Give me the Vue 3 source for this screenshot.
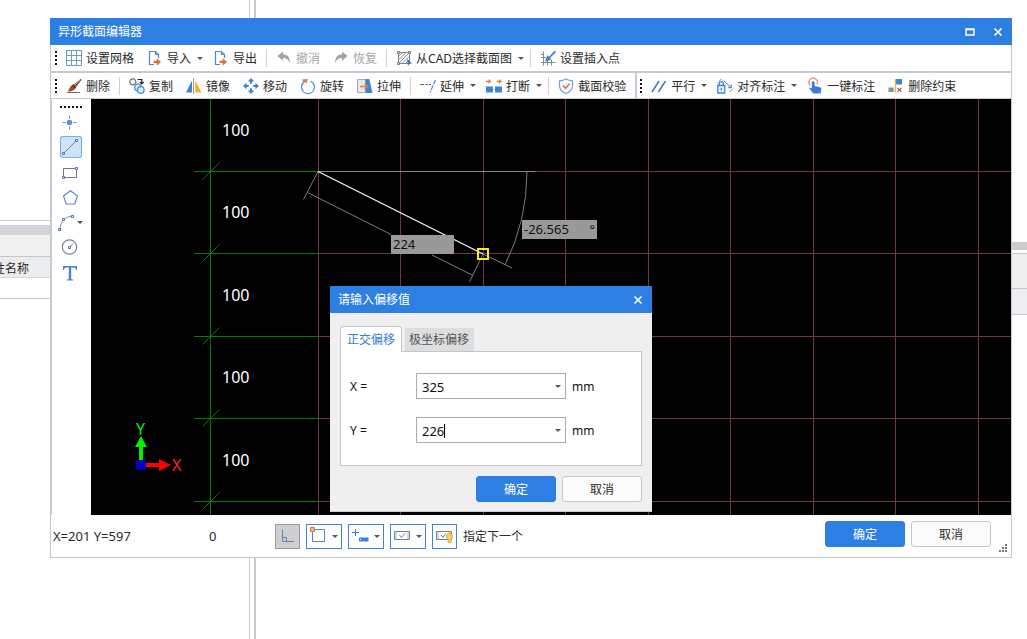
<script setup>
import { ref, computed } from 'vue'

const icons = {
  grid: '<path d="M.5.5h15v15H.5zM5.5.5v15M10.5.5v15M.5 5.5h15M.5 10.5h15" fill="none" stroke="#6f97c9"/>',
  import: '<path d="M7 14.5H2.5v-13h6l3 3V8M8.500 1.500v3h3" fill="none" stroke="#4b8ad6" stroke-width="1.200"/><path d="M6.500 10.800h3.200V8l4.300 3.900-4.300 3.900v-2.900H6.500z" fill="#d9772f"/>',
  export: '<path d="M7 14.5H2.5v-13h6l3 3V8M8.500 1.500v3h3" fill="none" stroke="#4b8ad6" stroke-width="1.200"/><path d="M6.500 10.800h3.200V8l4.300 3.900-4.300 3.900v-2.900H6.500z" fill="#d9772f"/>',
  undo: '<path d="M1.500 6 7 1.500v2.800c4.500.2 7 3 6.800 9.200C12.500 9.500 10.700 8 7 7.900v2.800z" fill="#a3a3a3"/>',
  redo: '<path d="M14.500 6 9 1.500v2.800C4.500 4.500 2 7.300 2.200 13.500 3.500 9.500 5.300 8 9 7.900v2.800z" fill="#a3a3a3"/>',
  cad: '<path d="M2.500 2.500h11v11h-11z" fill="none" stroke="#888"/><path d="M3 6l3-3M3 9.500 9.500 3M3 13 13 3M6.500 13 13 6.500M10 13l3-3" stroke="#8f9499" fill="none"/><path d="M1.500 1.500h2v2h-2zM12.500 1.500h2v2h-2zM1.500 12.500h2v2h-2z" fill="#fff" stroke="#777"/><path d="M11 9l5 4.500-2.500.3L12 16z" fill="#2e6fc7"/>',
  insert: '<path d="M3.500 1.500v14M1 12.500h14.500M1 7.500h5M7.500 9v6.500M11.500 10v5.500M1 4.500h3" fill="none" stroke="#8b8b8b"/><path d="M14.500.8 9 6.800 7.300 5.200 5 11.800l6.600-2.200-1.600-1.500L16 2z" fill="#3c80d2"/>',
  brush: '<path d="M1 14.500h13" stroke="#666"/><path d="M14.800.8 8 6.500l2.200 2.300L15.500 2z" fill="#555"/><path d="M14 2 8.500 7.500" stroke="#d9a066"/><path d="M7.800 6.300C4.500 7 3.800 10 2 13.500c3.800.3 7.300-1.500 8.400-4.800z" fill="#a04b2d"/><path d="M6.800 7.200 9.500 10" stroke="#4a2a20" stroke-width="1.300"/>',
  copy: '<circle cx="3.800" cy="3.800" r="3" fill="#f3f3f3" stroke="#777" stroke-width="1.200"/><circle cx="9" cy="9.500" r="3.300" fill="#dcebfa" stroke="#4b8ad6" stroke-width="1.300"/><circle cx="11.800" cy="12" r="3.300" fill="#dcebfa" stroke="#4b8ad6" stroke-width="1.300"/><path d="M8.500 1.500h4.300V5M10.800 3.800l2 2 2-2" fill="none" stroke="#222" stroke-width="1.200"/>',
  mirror: '<path d="M6 2.500V14.500H0z" fill="#3f83d4"/><path d="M7.500 0v16" stroke="#999"/><path d="M9.200 2.500V14.500h6.300z" fill="#efb02f"/>',
  move: '<path d="M8 0l3.200 3.600H9v2.200H7V3.600H4.800zM8 16l3.200-3.600H9v-2.200H7v2.200H4.800zM0 8l3.600-3.200V7h2.200v2H3.600v2.200zM16 8l-3.600-3.200V7h-2.200v2h2.200v2.200z" fill="#3f83d4"/>',
  rotate: '<path d="M10.500 3.200A6.500 6.500 0 1 1 4.300 3.900" fill="none" stroke="#5b97dc" stroke-width="1.300"/><path d="M2 1.500 8 1l-1.500 4.500L5.300 4 3.500 5z" fill="#e2813b"/>',
  stretch: '<path d="M.5 1.500h8v13h-8z" fill="#e6e8eb" stroke="#a5a9b0"/><path d="M8.500 1h3.800l3.200 14h-7z" fill="#3f83d4"/><path d="M3 8.500h6M7.500 6l3 2.500-3 2.500" fill="none" stroke="#e2813b" stroke-width="1.400"/>',
  extend: '<path d="M0 6.500h4M5.500 6.500H8M9 6.500h2" stroke="#666"/><path d="M15.500 2 10 14.500" stroke="#4b8ad6" stroke-width="1.200" stroke-dasharray="5 1"/>',
  break: '<path d="M0 8.500h7v6H0zM9 8.500h7v6H9z" fill="#3f83d4"/><path d="M0 3.500h5M3 1.500v4M11 3.500h5M13.500 1.500v4" stroke="#e2813b" stroke-width="1.300"/><path d="M7.500 11.500h1" stroke="#999"/>',
  shield: '<path d="M8 .8c2 1.500 4.200 2 6.500 2v4.700c0 4-2.500 6.500-6.500 8-4-1.500-6.500-4-6.500-8V2.800c2.300 0 4.500-.5 6.500-2z" fill="#f5faff" stroke="#6fa2dd" stroke-width="1.200"/><path d="M4.800 7.500l2.700 2.800 4-4.600" fill="none" stroke="#e06e4a" stroke-width="1.500"/>',
  parallel: '<path d="M1 14 8 3M7.500 14l7-11" stroke="#4b78b0" stroke-width="1.500"/>',
  align: '<path d="M.8 7.500h7v7.500h-7z" fill="#eaf3fd" stroke="#3f83d4" stroke-width="1.300"/><path d="M2.300 7.500V5.700a2 2 0 0 1 4 0v1.800M4.300 10v2.500" fill="none" stroke="#3f83d4" stroke-width="1.300"/><path d="M1 4.500 4.500.8M12.500 14 16 10.500" stroke="#888"/><path d="M6.500 2.500 14 9.500M14.200 6.500v3.200h-3.200" fill="none" stroke="#4b78b0"/>',
  hand: '<path d="M3.200 7.200A4.200 4.200 0 1 1 9.800 6.500" fill="none" stroke="#e88a73" stroke-width="1.300"/><path d="M4.800 4.500c0-1.700 2.800-1.700 2.800 0V8l5.300 1.200c1.300.3 1.600 1 1.400 2.200L13.600 15.500H6.200L2.500 10.800c-.6-1.200.8-1.800 2.300-.2z" fill="#3a7fd3"/>',
  constraint: '<path d="M8 1h6v5.500H8z" fill="#3f83d4"/><path d="M7.500 1v13.500" stroke="#edb33a" stroke-width="1.300"/><path d="M.5 9.500h5.200V14H.5z" fill="#8c929b"/><path d="M9.500 9.800l4 4M13.500 9.800l-4 4" stroke="#b04a3a" stroke-width="1.100"/>',
}

const tools = {
  point: '<path d="M9.500 4.500v3M9.500 15.500v3M2.500 11.500h3M13.500 11.500h3" stroke="#8a9077"/><circle cx="9.500" cy="11.500" r="2.800" fill="#6090dc"/>',
  line: '<path d="M4 17 17 4" stroke="#6c7f98"/><path d="M2.500 16.500h2v2h-2zM15.500 3.500h2v2h-2z" fill="#eef6ff" stroke="#4876b8"/>',
  rect: '<path d="M3.500 7.500h13v9h-13z" fill="none" stroke="#777"/><path d="M2.500 15.500h2v2h-2zM15.500 6.500h2v2h-2z" fill="#fff" stroke="#4876b8"/>',
  polygon: '<path d="M10.500 4.800 17.500 10l-2.700 8H6.200L3.500 10z" fill="none" stroke="#5a87cb" stroke-width="1.200"/>',
  arc: '<path d="M0 18C.5 10 5 5.500 13 5" fill="none" stroke="#8196b4"/><path d="M-1.500 17.500h2v2h-2zM2.500 7.500h2v2h-2zM11.500 4.500h2v2h-2z" fill="#fff" stroke="#4876b8"/>',
  circle: '<circle cx="9.500" cy="11" r="7.200" fill="none" stroke="#7a7f87" stroke-width="1.200"/><path d="M9.500 11 13 7.500" stroke="#777"/><path d="M8.500 10.500h2v2h-2z" fill="#fff" stroke="#4876b8"/>',
  text: '<path d="M3 5h14v4h-1c-.3-1.800-1-2.500-3-2.500h-1.800V17c0 1 .5 1.500 2 1.500v1H6.800v-1c1.500 0 2-.5 2-1.500V6.500H7C5 6.500 4.300 7.200 4 9H3z" fill="#5182ca"/>',
}

const snaps = [
  { label: '正交', art: '<path d="M3.500 1.500v12H15M3.500 9.500h4v4" fill="none" stroke="#5b87b5"/>', on: true },
  { label: '捕捉', art: '<path d="M2.500 1.500h12v12h-12z" fill="none" stroke="#4f86c4"/><path d="M.5-.5h4v4h-4z" fill="#f2b489" stroke="#d9773a"/>', menu: true },
  { label: '输入', art: '<path d="M0 4.500h7M3.500 1v7" stroke="#3c78c0"/><path d="M7 9.500h9.500v4H7z" fill="#3c80d8"/><path d="M8 11.500h1" stroke="#fff"/>', menu: true },
  { label: '显示', art: '<path d="M.5 3.500h15v8H.5z" fill="#d3d7db" stroke="#7a8087"/><path d="M3 4h10v7H3z" fill="#fff"/><path d="M5.500 7l2 2.500 3.500-4" fill="none" stroke="#4f86c4"/>', menu: true },
  { label: '提示', art: '<path d="M.5 3.500h15v8H.5z" fill="#d3d7db" stroke="#7a8087"/><path d="M3 4h10v7H3z" fill="#fff"/><path d="M5 7l2 2.500 3-4" fill="none" stroke="#4f86c4"/><path d="M13.500 5.500c4 0 3.500 4.500 1.500 6v3h-3v-3c-2-1.500-2.500-6 1.500-6z" fill="#f6cf5c" stroke="#c99b3a" stroke-width=".7"/>' },
]

const fileTools = [
  { icon: 'grid', text: '设置网格' },
  { icon: 'import', text: '导入', menu: true },
  { icon: 'export', text: '导出' },
  { sep: true },
  { icon: 'undo', text: '撤消', off: true },
  { icon: 'redo', text: '恢复', off: true },
  { sep: true },
  { icon: 'cad', text: '从CAD选择截面图', menu: true },
  { sep: true },
  { icon: 'insert', text: '设置插入点' },
]
const editTools = [
  { icon: 'brush', text: '删除' },
  { sep: true },
  { icon: 'copy', text: '复制' },
  { icon: 'mirror', text: '镜像' },
  { icon: 'move', text: '移动' },
  { icon: 'rotate', text: '旋转' },
  { icon: 'stretch', text: '拉伸' },
  { sep: true },
  { icon: 'extend', text: '延伸', menu: true },
  { icon: 'break', text: '打断', menu: true },
  { sep: true },
  { icon: 'shield', text: '截面校验' },
]
const markTools = [
  { icon: 'parallel', text: '平行', menu: true },
  { icon: 'align', text: '对齐标注', menu: true },
  { icon: 'hand', text: '一键标注' },
  { icon: 'constraint', text: '删除约束' },
]
const rows = [[fileTools], [editTools, markTools]]

const drawTools = [
  { id: 'point', label: '点' },
  { id: 'line', label: '直线' },
  { id: 'rect', label: '矩形' },
  { id: 'polygon', label: '多边形' },
  { id: 'arc', label: '弧', menu: true },
  { id: 'circle', label: '圆' },
  { id: 'text', label: '文字' },
]
const tool = ref('line')

const step = 82.5
const columns = computed(() => Array.from({ length: 24 }, (_, i) => Math.floor(227 + i * step) + 0.5))
const levels = computed(() => Array.from({ length: 5 }, (_, i) => Math.floor(72 + i * step) + 0.5))

const length = ref('224')
const angle = ref('-26.565')
const tab = ref('ortho')
const offsets = ref([
  { id: 'offset-x', label: 'X =', value: '325' },
  { id: 'offset-y', label: 'Y =', value: '226', caret: true },
])
</script>

<template>
  <div class="desktop">
    <div class="split" aria-hidden="true"></div>
    <div class="back back-left">
      <div class="band"></div>
      <div class="strip"></div>
      <div class="head"><span>性名称</span></div>
      <div class="line"></div>
    </div>
    <div class="back back-right">
      <div class="band"></div>
      <div class="cell"></div>
      <div class="cell short"></div>
    </div>

    <main class="window">
      <header class="title">
        <h1>异形截面编辑器</h1>
        <button type="button" aria-label="最大化">
          <svg width="10" height="10"><path d="M1 2h8v6H1zM1 2.500h8" fill="none" stroke="#fff" stroke-width="1.500" /></svg>
        </button>
        <button type="button" aria-label="关闭">
          <svg width="10" height="10"><path d="M1.500 1.500l7 7M8.500 1.500l-7 7" stroke="#fff" stroke-width="1.600" /></svg>
        </button>
      </header>

      <div v-for="(row, r) in rows" :key="r" class="bar-row">
        <div v-for="(group, g) in row" :key="g" class="bar" role="toolbar">
          <i class="grip"></i>
          <template v-for="(t, i) in group" :key="i">
            <i v-if="t.sep" class="sep"></i>
            <button v-else type="button" class="tool" :class="{ menu: t.menu }" :disabled="t.off">
              <svg width="16" height="16" v-html="icons[t.icon]"></svg>
              <span>{{ t.text }}</span>
              <i v-if="t.menu" class="arrow"></i>
            </button>
          </template>
        </div>
      </div>

      <section class="work">
        <nav class="side">
          <i class="grip wide"></i>
          <button
            v-for="d in drawTools"
            :key="d.id"
            type="button"
            :aria-label="d.label"
            :class="{ on: tool === d.id }"
            @click="tool = d.id"
          >
            <svg width="20" height="22" v-html="tools[d.id]"></svg>
            <i v-if="d.menu" class="arrow"></i>
          </button>
        </nav>

        <div class="canvas">
          <svg class="drawing" width="100%" height="100%">
            <g stroke="#713838">
              <line v-for="x in columns" :key="x" :x1="x" :x2="x" y1="0" y2="100%" />
              <line v-for="y in levels" :key="y" x1="227" x2="100%" :y1="y" :y2="y" />
            </g>
            <g stroke="#007c08">
              <line x1="119.500" x2="119.500" y1="0" y2="100%" />
              <template v-for="y in levels" :key="y">
                <line x1="103" x2="227" :y1="y" :y2="y" />
                <line x1="111.500" x2="128.500" :y1="y + 8" :y2="y - 9" />
              </template>
            </g>
            <g class="dims">
              <text v-for="y in levels" :key="y" x="131" :y="y - 36">100</text>
            </g>
            <g fill="none" stroke="#7d7d7d">
              <path d="M227 72.500H444" stroke="#8c8080" />
              <path d="M227 72.500 212.500 100.500M216.500 93.500 300 135.500M341 156l41 20.500M392 155l-13.500 28M392 155l29 14" />
              <path d="M436 72.500A209 209 0 0 1 414 166" />
            </g>
            <path d="M227 72.500 392 155" stroke="#f4f4f4" stroke-width="1.300" />
            <rect x="387" y="150" width="10" height="10" fill="none" stroke="#f5ee18" stroke-width="2" />
            <path d="M50 337l6 11h-4v14h-4v-14h-4z" fill="#00f000" />
            <path d="M80 366l-12-6v4H54v4h14v4z" fill="#f00" />
            <rect x="45" y="361" width="10" height="10" rx="2" fill="#0000c4" />
            <text x="45" y="336" class="axis-y">Y</text>
            <text x="81" y="372" class="axis-x">X</text>
          </svg>

          <input v-model="length" class="probe length" aria-label="长度" />
          <label class="probe angle"><input v-model="angle" aria-label="角度" /><span>°</span></label>

          <form class="dialog" role="dialog" aria-labelledby="offset-title" @submit.prevent>
            <header class="title">
              <h2 id="offset-title">请输入偏移值</h2>
              <button type="button" aria-label="关闭">
                <svg width="10" height="10"><path d="M1.500 1.500l7 7M8.500 1.500l-7 7" stroke="#fff" stroke-width="1.600" /></svg>
              </button>
            </header>
            <div class="dialog-body">
              <div class="tabs" role="tablist">
                <button type="button" role="tab" :class="{ on: tab === 'ortho' }" @click="tab = 'ortho'">正交偏移</button>
                <button type="button" role="tab" :class="{ on: tab === 'polar' }" @click="tab = 'polar'">极坐标偏移</button>
              </div>
              <div class="panel">
                <div v-for="o in offsets" :key="o.id" class="field">
                  <label :for="o.id">{{ o.label }}</label>
                  <div class="combo">
                    <input :id="o.id" v-model="o.value" />
                    <i v-if="o.caret" class="caret"></i>
                    <button type="button" aria-label="历史值"><i class="arrow"></i></button>
                  </div>
                  <span>mm</span>
                </div>
              </div>
              <div class="actions">
                <button type="submit" class="btn primary">确定</button>
                <button type="button" class="btn">取消</button>
              </div>
            </div>
          </form>
        </div>
      </section>

      <footer class="status">
        <span class="coords">X=201 Y=597</span>
        <span class="zero">0</span>
        <div class="snaps">
          <button v-for="s in snaps" :key="s.label" type="button" :aria-label="s.label" :class="{ on: s.on, menu: s.menu }">
            <svg width="17" height="16" v-html="s.art"></svg>
            <i v-if="s.menu" class="arrow"></i>
          </button>
        </div>
        <span class="hint">指定下一个</span>
        <div class="actions">
          <button type="button" class="btn primary">确定</button>
          <button type="button" class="btn">取消</button>
        </div>
        <svg class="resize" width="9" height="9" aria-hidden="true">
          <path d="M6 0h2v2H6zM3 3h2v2H3zM6 3h2v2H6zM0 6h2v2H0zM3 6h2v2H3zM6 6h2v2H6z" fill="#777" />
        </svg>
      </footer>
    </main>
  </div>
</template>

<style>
body {
  margin: 0;
  background: #fff;
}
</style>

<style scoped>
* {
  box-sizing: border-box;
}
.desktop {
  position: relative;
  display: flex;
  min-height: 100vh;
  padding: 18px 15px 81px 50px;
  overflow: hidden;
  background: #fff;
  color: #2b2b2b;
  font: 12px/18px "Noto Sans", "Noto Sans CJK SC", sans-serif;
}
button,
input {
  margin: 0;
  padding: 0;
  border: 0;
  background: none;
  color: inherit;
  font: inherit;
}
input {
  outline: 0;
  min-width: 0;
}
svg {
  display: block;
  flex: none;
  overflow: visible;
}
h1,
h2 {
  flex: 1;
  margin: 0;
  font: inherit;
}

.split {
  position: absolute;
  top: 0;
  bottom: 0;
  left: 249px;
  width: 7px;
  border-left: 1px solid #c9cbd2;
  border-right: 2px solid #c9cbd2;
}
.back {
  position: absolute;
  left: 0;
  width: 50px;
}
.back-left {
  top: 220px;
  border-top: 1px solid #c9cbd0;
  padding-top: 4px;
}
.back-left .band {
  height: 10px;
  background: #d4d5dc;
}
.back-left .strip {
  height: 22px;
  background: #f0f0f0;
  border-bottom: 1px solid #c4c6cb;
}
.back-left .head {
  display: flex;
  justify-content: flex-end;
  height: 21px;
  padding-right: 21px;
  line-height: 24px;
  background: #ebecee;
  border-bottom: 1px solid #d4d6da;
}
.back-left .head span {
  flex: none;
}
.back-left .line {
  height: 21px;
  border-bottom: 1px solid #c9cbd0;
}
.back-right {
  left: auto;
  right: 0;
  top: 242px;
  width: 15px;
}
.back-right .band {
  height: 8px;
  margin-bottom: 3px;
  background: #cbcbcb;
}
.back-right .cell {
  height: 36px;
  background: #eee;
  border-top: 1px solid #c4c6ca;
  border-bottom: 1px solid #c4c6ca;
}
.back-right .short {
  height: 26px;
  border-top: 0;
  background: #edeef1;
}

.window {
  position: relative;
  flex: 1;
  display: flex;
  flex-direction: column;
  min-width: 0;
  background: #fefefe;
}
.title {
  display: flex;
  align-items: center;
  gap: 18px;
  height: 27px;
  padding: 0 9px 0 8px;
  background: #2d80e2;
  color: #fff;
}
.bar-row {
  display: flex;
  height: 28px;
  border: solid #c8cad0;
  border-width: 0 1px 2px;
}
.bar-row + .bar-row {
  height: 26px;
  border-bottom-width: 1px;
}
.bar {
  display: flex;
  align-items: center;
  padding-left: 4px;
}
.bar + .bar {
  margin-left: 3px;
  border-left: 2px solid #c8cad0;
  padding-left: 3px;
}
.grip {
  width: 2px;
  height: 14px;
  margin-right: 2px;
  background: repeating-linear-gradient(#111 0 2px, transparent 2px 4px);
}
.sep {
  width: 1px;
  height: 18px;
  margin: 0 2px 0 3px;
  background: #d0d0d0;
}
.tool {
  display: flex;
  align-items: center;
  gap: 4px;
  padding: 0 6px 0 7px;
  white-space: nowrap;
}
.tool span {
  padding-top: 2px;
}
.tool.menu {
  padding-right: 2px;
}
.tool:disabled {
  color: #a6a6a6;
}
.arrow {
  display: block;
  flex: none;
  width: 6px;
  border: solid transparent;
  border-width: 3px 3px 0;
  border-top-color: #555;
}
.tool .arrow {
  margin: 0 1px 0 2px;
}

.work {
  flex: 1;
  display: flex;
  min-height: 0;
  border-right: 1px solid #c8cad0;
}
.side {
  display: flex;
  flex-direction: column;
  gap: 3px;
  width: 41px;
  padding: 7px 0 0 8px;
  border-left: 2px solid #c8cad0;
}
.grip.wide {
  width: 22px;
  height: 2px;
  background: repeating-linear-gradient(90deg, #111 0 2px, transparent 2px 4px);
}
.side button {
  display: flex;
  align-items: center;
  width: 22px;
  height: 22px;
  border-radius: 3px;
}
.side button.on {
  background: #cde4fa;
  box-shadow: inset 0 0 0 1px #78ade6;
}
.side .arrow {
  margin-left: -3px;
}
.canvas {
  position: relative;
  flex: 1;
  min-width: 0;
  overflow: hidden;
  background: #000;
}
.drawing {
  position: absolute;
  inset: 0;
  font-size: 16px;
}
.dims {
  fill: #fff;
}
.axis-y {
  fill: #00f000;
}
.axis-x {
  fill: #f22;
}
.probe {
  position: absolute;
  height: 19px;
  padding: 0 2px 1px;
  background: #999;
  color: #111;
  font-size: 13px;
}
.length {
  left: 300px;
  top: 136px;
  width: 63px;
}
.angle {
  left: 431px;
  top: 121px;
  display: flex;
  align-items: center;
  width: 75px;
}
.angle input {
  flex: 1;
}

.dialog {
  position: absolute;
  left: 239px;
  top: 187px;
  width: 322px;
  background: #efeff0;
  border-bottom: 1px solid #ccc;
}
.dialog-body {
  padding: 13px 10px 9px;
}
.tabs {
  display: flex;
  align-items: flex-end;
  gap: 3px;
  margin-bottom: -1px;
}
.tabs button {
  height: 23px;
  padding: 1px 5px 0 4px;
  background: #dcdddf;
  margin-bottom: 1px;
  color: #555;
}
.tabs .on {
  position: relative;
  height: 26px;
  margin-bottom: 0;
  padding: 0 6px;
  border: 1px solid #c2c5c9;
  border-bottom: 0;
  border-radius: 4px 4px 0 0;
  background: #fff;
  color: #3580d6;
}
.panel {
  display: flex;
  flex-direction: column;
  gap: 18px;
  padding: 21px 9px 22px;
  border: 1px solid #c2c5c9;
  background: #fff;
}
.field {
  display: flex;
  align-items: center;
  gap: 6px;
  color: #111;
}
.field label,
.field span {
  padding-top: 1px;
}
.field label {
  width: 60px;
}
.combo {
  display: flex;
  align-items: center;
  width: 150px;
  height: 26px;
  padding: 1px 0 0 5px;
  border: 1px solid #a8abaf;
  font-size: 13px;
}
.combo input {
  field-sizing: content;
}
.caret {
  width: 1px;
  height: 14px;
  background: #000;
}
.combo button {
  margin-left: auto;
  padding: 8px 4px;
}
.actions {
  display: flex;
  justify-content: flex-end;
  gap: 6px;
}
.dialog .actions {
  margin-top: 10px;
}
.btn {
  width: 80px;
  height: 26px;
  padding-top: 2px;
  border: 1px solid #c4c7cb;
  border-radius: 3px;
  background: #fbfbfb;
}
.btn.primary {
  border-color: #2d80e2;
  background: #2d80e2;
  color: #fff;
}

.status {
  display: flex;
  align-items: center;
  height: 43px;
  padding-left: 2px;
  border: 1px solid #c4c7cc;
  border-top: 0;
  font-size: 13px;
}
.coords {
  width: 156px;
}
.zero {
  width: 66px;
}
.snaps {
  display: flex;
  gap: 6px;
}
.snaps button {
  display: flex;
  align-items: center;
  gap: 5px;
  height: 25px;
  padding: 0 3px;
  border: 1px solid #3f86d6;
}
.snaps button.menu {
  width: 36px;
}
.snaps button.on {
  border-color: #9a9da2;
  background: #cfcfd1;
}
.hint {
  margin-left: 6px;
  padding-top: 2px;
  font-size: 12px;
}
.status .actions {
  margin: 0 8px 4px auto;
  font-size: 12px;
}
.resize {
  align-self: flex-end;
  margin: 0 3px 4px 0;
}
</style>
